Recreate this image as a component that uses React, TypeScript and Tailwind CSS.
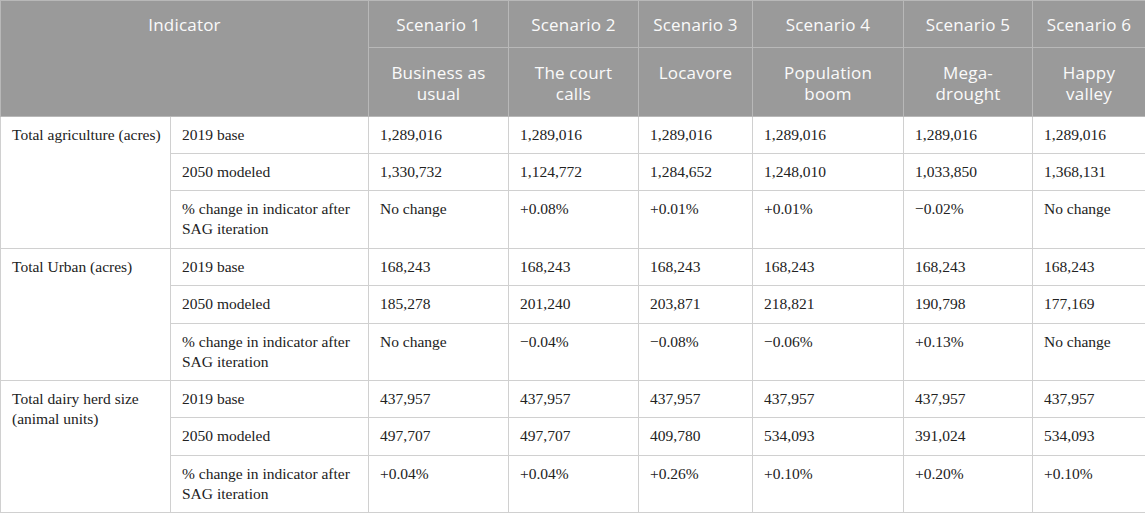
import React from "react";

const scenarios = [
  { n: "Scenario 1", name: "Business as usual" },
  { n: "Scenario 2", name: "The court calls" },
  { n: "Scenario 3", name: "Locavore" },
  { n: "Scenario 4", name: "Population boom" },
  { n: "Scenario 5", name: "Mega-drought" },
  { n: "Scenario 6", name: "Happy valley" },
];

const groups = [
  {
    label: "Total agriculture (acres)",
    heights: ["h-[37px]", "h-[37px]", "h-[58px]"],
    rows: [
      ["2019 base", ["1,289,016", "1,289,016", "1,289,016", "1,289,016", "1,289,016", "1,289,016"]],
      ["2050 modeled", ["1,330,732", "1,124,772", "1,284,652", "1,248,010", "1,033,850", "1,368,131"]],
      ["% change in indicator after SAG iteration", ["No change", "+0.08%", "+0.01%", "+0.01%", "\u22120.02%", "No change"]],
    ],
  },
  {
    label: "Total Urban (acres)",
    heights: ["h-[37px]", "h-[38px]", "h-[57px]"],
    rows: [
      ["2019 base", ["168,243", "168,243", "168,243", "168,243", "168,243", "168,243"]],
      ["2050 modeled", ["185,278", "201,240", "203,871", "218,821", "190,798", "177,169"]],
      ["% change in indicator after SAG iteration", ["No change", "\u22120.04%", "\u22120.08%", "\u22120.06%", "+0.13%", "No change"]],
    ],
  },
  {
    label: "Total dairy herd size (animal units)",
    heights: ["h-[37px]", "h-[38px]", "h-[57px]"],
    rows: [
      ["2019 base", ["437,957", "437,957", "437,957", "437,957", "437,957", "437,957"]],
      ["2050 modeled", ["497,707", "497,707", "409,780", "534,093", "391,024", "534,093"]],
      ["% change in indicator after SAG iteration", ["+0.04%", "+0.04%", "+0.26%", "+0.10%", "+0.20%", "+0.10%"]],
    ],
  },
] as const;

const widths = ["w-[170px]", "w-[198px]", "w-[140px]", "w-[130px]", "w-[114px]", "w-[151px]", "w-[129px]", "w-[113px]"];

const th = "border border-[#b8b8b8] px-2 pt-[13px] pb-[12px] text-center align-top font-normal text-[#fafafa]";
const td = "border border-[#d0d0d0] pl-[11px] pr-2 pt-2 pb-2 align-top leading-[20px]";

const App = () => {
  return (
    <div className="w-[1145px] h-[513px] bg-white overflow-hidden">
      <table className="w-[1145px] table-fixed border-collapse">
        <colgroup>
          {widths.map((w, i) => (
            <col key={i} className={w} />
          ))}
        </colgroup>
        <thead className="bg-[#9a9a9a] text-[17px] leading-[21px] font-['Open_Sans',sans-serif] tracking-[0.2px]">
          <tr>
            <th colSpan={2} rowSpan={2} className={th}>Indicator</th>
            {scenarios.map((s) => (
              <th key={s.n} className={th}>{s.n}</th>
            ))}
          </tr>
          <tr>
            {scenarios.map((s) => (
              <th key={s.name} className="border border-[#b8b8b8] px-2 pt-[14px] pb-[12px] text-center align-top font-normal text-[#fafafa]">
                {s.name}
              </th>
            ))}
          </tr>
        </thead>
        <tbody className="text-[15.5px] text-[#222] font-['Liberation_Serif',serif]">
          {groups.map((g) =>
            g.rows.map((r, i) => (
              <tr key={g.label + i} className={g.heights[i]}>
                {i === 0 && (
                  <td rowSpan={3} className={td}>{g.label}</td>
                )}
                <td className={td}>{r[0]}</td>
                {r[1].map((v, j) => (
                  <td key={j} className={td}>{v}</td>
                ))}
              </tr>
            ))
          )}
        </tbody>
      </table>
    </div>
  );
};

export default App;
